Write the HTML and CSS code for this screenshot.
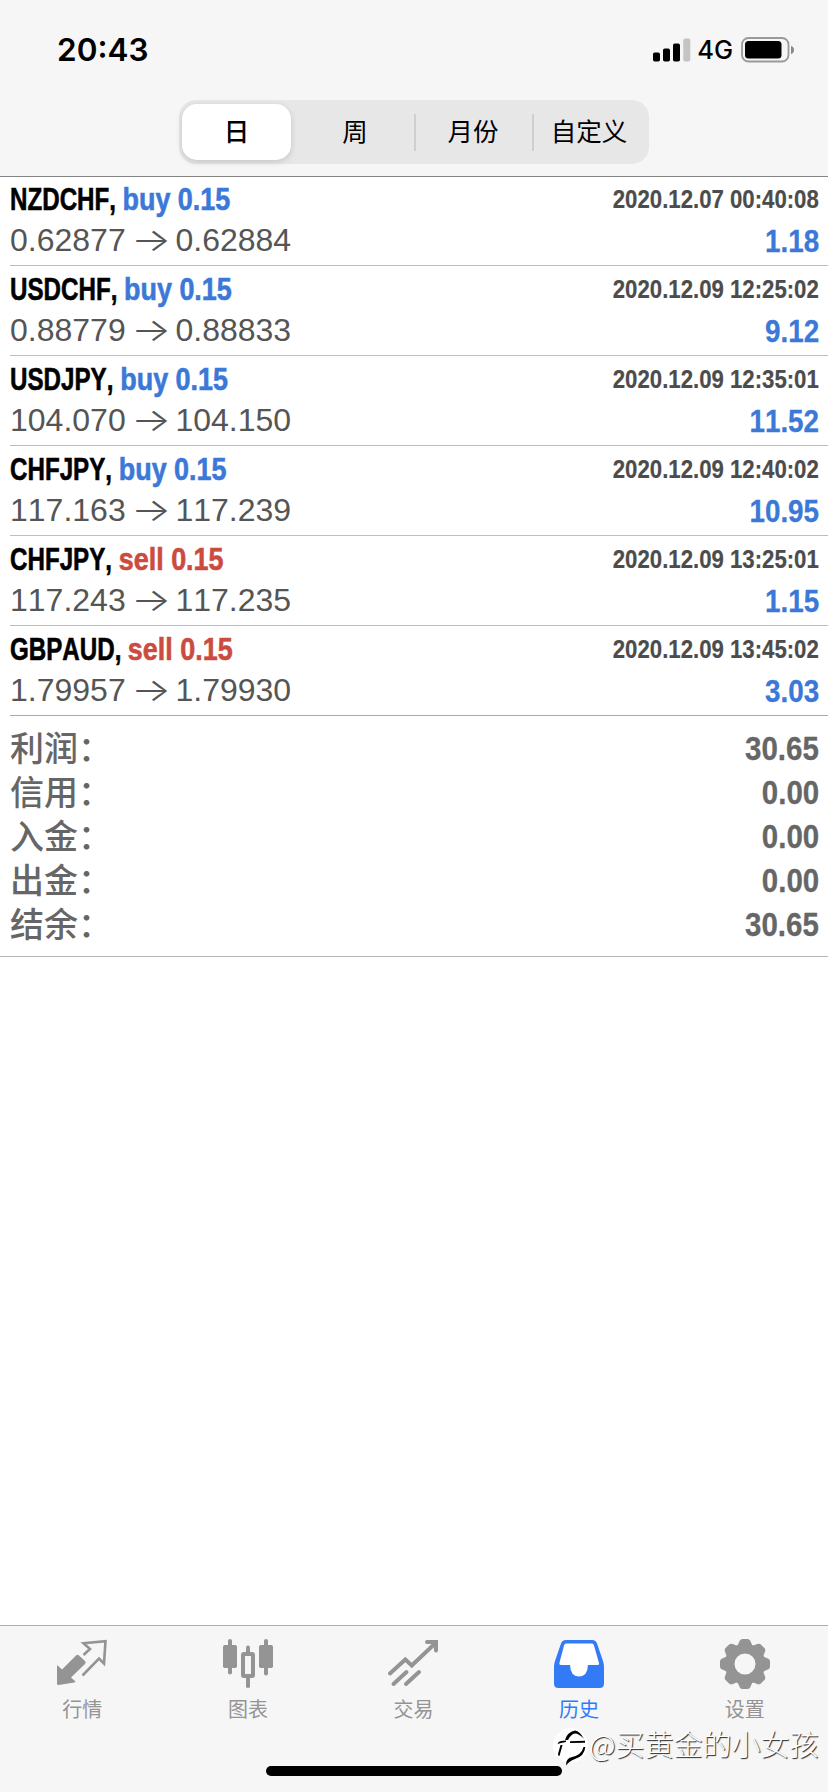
FILE: index.html
```html
<!DOCTYPE html>
<html lang="zh-CN">
<head>
<meta charset="utf-8">
<title>历史</title>
<link rel="stylesheet" href="styles.css">
</head>
<body>
<header class="header">
  <div class="status">
    <span class="clock">20:43</span>
    <div class="indicators">
      <svg class="signal" width="38" height="24" viewBox="0 0 38 24"><rect x="0" y="14.5" width="7" height="9" rx="1.8"/><rect x="10" y="10.5" width="7" height="13" rx="1.8"/><rect x="20" y="5.5" width="7" height="18" rx="1.8"/><rect x="30.3" y="0.5" width="7" height="23" rx="1.8" fill="#c4c4c4"/></svg>
      <span class="network">4G</span>
      <svg class="battery" width="54" height="26" viewBox="0 0 54 26"><rect x="1" y="1" width="46.500" height="23.500" rx="6.500" fill="none" stroke="#999" stroke-width="1.800"/><rect x="4" y="4" width="36.500" height="17.500" rx="3.500"/><path d="M50 9 C54 10 54 16 50 17Z" fill="#888"/></svg>
    </div>
  </div>
  <nav class="segments">
    <span class="segment selected">日</span>
    <span class="segment week">周</span>
    <span class="segment divided">月份</span>
    <span class="segment divided">自定义</span>
  </nav>
</header>
<main class="content">
  <section class="deals">
    <article class="deal"><div class="line"><div class="title">NZDCHF, <span class="action buy">buy 0.15</span></div><time class="time">2020.12.07 00:40:08</time></div><div class="line second"><div class="prices">0.62877 <span class="arrow">→</span> 0.62884</div><div class="profit">1.18</div></div></article>
    <article class="deal"><div class="line"><div class="title">USDCHF, <span class="action buy">buy 0.15</span></div><time class="time">2020.12.09 12:25:02</time></div><div class="line second"><div class="prices">0.88779 <span class="arrow">→</span> 0.88833</div><div class="profit">9.12</div></div></article>
    <article class="deal"><div class="line"><div class="title">USDJPY, <span class="action buy">buy 0.15</span></div><time class="time">2020.12.09 12:35:01</time></div><div class="line second"><div class="prices">104.070 <span class="arrow">→</span> 104.150</div><div class="profit">11.52</div></div></article>
    <article class="deal"><div class="line"><div class="title">CHFJPY, <span class="action buy">buy 0.15</span></div><time class="time">2020.12.09 12:40:02</time></div><div class="line second"><div class="prices">117.163 <span class="arrow">→</span> 117.239</div><div class="profit">10.95</div></div></article>
    <article class="deal"><div class="line"><div class="title">CHFJPY, <span class="action sell">sell 0.15</span></div><time class="time">2020.12.09 13:25:01</time></div><div class="line second"><div class="prices">117.243 <span class="arrow">→</span> 117.235</div><div class="profit">1.15</div></div></article>
    <article class="deal"><div class="line"><div class="title">GBPAUD, <span class="action sell">sell 0.15</span></div><time class="time">2020.12.09 13:45:02</time></div><div class="line second"><div class="prices">1.79957 <span class="arrow">→</span> 1.79930</div><div class="profit">3.03</div></div></article>
  </section>
  <section class="summary">
    <div class="total"><span class="label">利润：</span><b class="sum">30.65</b></div>
    <div class="total"><span class="label">信用：</span><b class="sum">0.00</b></div>
    <div class="total"><span class="label">入金：</span><b class="sum">0.00</b></div>
    <div class="total"><span class="label">出金：</span><b class="sum">0.00</b></div>
    <div class="total"><span class="label">结余：</span><b class="sum">30.65</b></div>
  </section>
</main>
<footer class="tabs">
  <div class="tab"><svg class="icon" viewBox="0 0 50 50"><path d="M0 26L5 30.500L19 16.500Q20.500 15 22 16.500L28 22Q29.500 23.500 28 25L14 38.500L18.500 42.500L17.500 43.500L1.500 46L0 45.500Z" fill="currentColor"/><path d="M26.500 16L33 10L26.500 4.200L48.500 2.200L47 24.500L42 19.500L25.500 36.500" fill="none" stroke="currentColor" stroke-width="2.600"/></svg>行情</div>
  <div class="tab"><svg class="icon" viewBox="0 0 50 50"><g fill="currentColor"><rect y="6" width="14" height="23" rx="1.800"/><rect x="5" width="4" height="35.500" rx="2"/><rect x="36" y="6" width="14" height="23" rx="1.800"/><rect x="41" width="4" height="36.500" rx="2"/><rect x="23" y="6.500" width="4" height="9" rx="2"/><rect x="23" y="37" width="4" height="12" rx="1.800"/></g><rect x="20" y="15" width="10" height="22" rx="1" fill="none" stroke="currentColor" stroke-width="4"/></svg>图表</div>
  <div class="tab"><svg class="icon" viewBox="0 0 50 50"><g fill="none" stroke="currentColor" stroke-width="4"><path d="M2 34.500L17.300 20.500L23.800 26.500L47 4.500" stroke-linecap="round"/><path d="M5.500 45L18.500 33M18 45L31 33" stroke-linecap="round"/><path d="M39 3H48V11.500" stroke-linecap="round"/></g><path d="M43 1H50V8Z" fill="currentColor"/></svg>交易</div>
  <div class="tab active"><svg class="icon" viewBox="0 0 50 50"><path d="M11 3.500Q12 4 11 4.700L5.400 24.500Q5 26 7 26H16Q16.500 37.500 25 37.500T34 26H43Q45.500 26 45 24.500L39.500 4Z" fill="#fff"/><path fill-rule="evenodd" d="M12 1H38Q42 1 43.200 5L49 22Q50 25 50 28V44.500Q50 49 45.500 49H4.500Q0 49 0 44.500V28Q0 25 1 22L6.800 5Q8 1 12 1ZM12 4.500Q10.500 4.500 10 6.500L5.400 24Q5 26 7 26H16Q16.500 37.500 25 37.500T34 26H43Q45.500 26 45 24L40 6.500Q39.500 4.500 38 4.500Z" fill="currentColor"/></svg>历史</div>
  <div class="tab"><svg class="icon" viewBox="-25 -25 50 50"><defs><path id="tooth" d="M-9 -17.500Q-7 -18.500 -6 -21.500Q-5 -25 -2.500 -25H2.500Q5 -25 6 -21.500Q7 -18.500 9 -17.500Z"/></defs><g fill="currentColor"><use href="#tooth"/><use href="#tooth" transform="rotate(45)"/><use href="#tooth" transform="rotate(90)"/><use href="#tooth" transform="rotate(135)"/><use href="#tooth" transform="rotate(180)"/><use href="#tooth" transform="rotate(225)"/><use href="#tooth" transform="rotate(270)"/><use href="#tooth" transform="rotate(315)"/></g><circle r="15" fill="none" stroke="currentColor" stroke-width="9"/></svg>设置</div>
</footer>
<div class="home-bar"></div>
<div class="watermark"><svg class="logo" width="36" height="38" viewBox="0 0 36 38"><circle cx="17.500" cy="17.500" r="17.500" fill="#fff"/><path d="M12 12Q14 4 22 2.500Q27 3 31 11Q26 5.500 22 5.500Q18 6 15 12Z"/><path d="M4.500 16Q5 13.500 8 13L13 12.500V14L8 15ZM17 13.300L32 12.800V14.800L17 15Z"/><path d="M7.500 17H9.500L6.500 28Q4.800 28 5 26Z"/><path d="M30.500 19H32.300Q31.500 28 22 31Q16 33 13 37.500Q12.500 30.500 19 29Q28.500 27 30.500 19Z"/></svg><span>@买黄金的小女孩</span></div>
</body>
</html>
```
FILE: styles.css
```css
* { box-sizing: border-box; }
body {
  margin: 0;
  width: 828px;
  height: 1792px;
  position: relative;
  display: flex;
  flex-direction: column;
  overflow: hidden;
  background: #fff;
  font-family: "Liberation Sans", "Noto Sans CJK SC", sans-serif;
  font-kerning: none;
}
.header {
  height: 177px;
  background: #f6f6f6;
  border-bottom: 1px solid #858585;
}
.status {
  height: 100px;
  padding: 0 33px 1px 57px;
  display: flex;
  justify-content: space-between;
  align-items: center;
  font-family: Inter, sans-serif;
}
.clock { font-size: 31.5px; font-weight: 600; }
.indicators { display: flex; align-items: center; }
.network { font-size: 25.500px; font-weight: 500; margin: 0 8px 0 6px; }
.segments {
  width: 470px;
  height: 64px;
  margin: 0 auto;
  padding: 4px 3px;
  display: grid;
  grid-template-columns: 109px 123px 118px 1fr;
  border-radius: 17px;
  background: #e7e7e8;
  font-family: "Noto Sans CJK SC", sans-serif;
  font-size: 25.500px;
}
.segment {
  display: flex;
  align-items: center;
  justify-content: center;
  position: relative;
  padding-bottom: 5px;
}
.segment.selected {
  border-radius: 15px;
  background: #fff;
  box-shadow: 0 2px 6px rgba(0, 0, 0, .15);
  font-weight: 500;
}
.week { padding-left: 5px; }
.divided::before {
  content: "";
  position: absolute;
  left: 0;
  top: 10px;
  width: 1.500px;
  height: 37px;
  background: #cfcfd2;
}
.content { flex: 1; }
.deal {
  height: 90px;
  margin-left: 10px;
  padding: 3px 9px 0 0;
  border-bottom: 1px solid #bdbdbd;
}
.deal:first-child { height: 89px; padding-top: 2px; }
.deal:last-child { border-color: #aaa; }
.line {
  display: flex;
  justify-content: space-between;
  height: 40px;
  line-height: 40px;
  white-space: pre;
  font-weight: 700;
}
.title {
  font-size: 32px;
  line-height: 41px;
  transform: scaleX(.755);
  transform-origin: left;
  -webkit-text-stroke: .6px currentColor;
}
.action {
  display: inline-block;
  transform: scaleX(1.115);
  transform-origin: left;
}
.buy, .profit { color: #3b78d8; }
.sell { color: #cc4b40; }
.time {
  color: #4c4c4c;
  font-size: 25.500px;
  transform: scaleX(.87);
  transform-origin: right;
  -webkit-text-stroke: .2px currentColor;
}
.second { line-height: 42px; }
.prices { font-size: 32px; font-weight: 400; color: #555; }
.arrow {
  display: inline-block;
  width: 32px;
  font-family: Inter, sans-serif;
  font-weight: 300;
  line-height: 1;
  transform: translateX(-4px) scaleX(1.32);
  transform-origin: left;
}
.profit {
  font-size: 32px;
  line-height: 44px;
  transform: scaleX(.87);
  transform-origin: right;
  -webkit-text-stroke: .3px currentColor;
}
.summary {
  height: 241px;
  padding: 11px 9px 0 10px;
  border-bottom: 1px solid #b5b5b5;
  color: #666;
}
.total {
  height: 44px;
  line-height: 44px;
  display: flex;
  justify-content: space-between;
  font-family: "Noto Sans CJK SC", sans-serif;
  font-size: 34px;
  font-weight: 500;
}
.label { line-height: 40px; }
.sum {
  font-family: "Liberation Sans", sans-serif;
  font-size: 33.500px;
  font-weight: 700;
  transform: scaleX(.88);
  transform-origin: right;
  -webkit-text-stroke: .3px currentColor;
}
.tabs {
  height: 167px;
  padding-top: 13px;
  display: flex;
  background: #f6f6f6;
  border-top: 1px solid #adadad;
}
.tab {
  flex: 1;
  display: flex;
  flex-direction: column;
  align-items: center;
  padding-right: 1px;
  color: #949494;
  font-family: "Noto Sans CJK SC", sans-serif;
  font-size: 20px;
  line-height: 28px;
}
.active { color: #337bf6; }
.icon { width: 50px; height: 50px; margin-bottom: 6px; }
.home-bar {
  position: absolute;
  left: 266px;
  top: 1766px;
  width: 296px;
  height: 10px;
  border-radius: 5px;
  background: #000;
}
.watermark {
  position: absolute;
  left: 553px;
  top: 1719px;
  display: flex;
  align-items: center;
  color: #fff;
  font: 300 29px/40px "Noto Sans CJK SC", sans-serif;
  text-shadow: 1px 1px 1px #222;
  white-space: nowrap;
}
.logo { margin-top: 9px; }
```
